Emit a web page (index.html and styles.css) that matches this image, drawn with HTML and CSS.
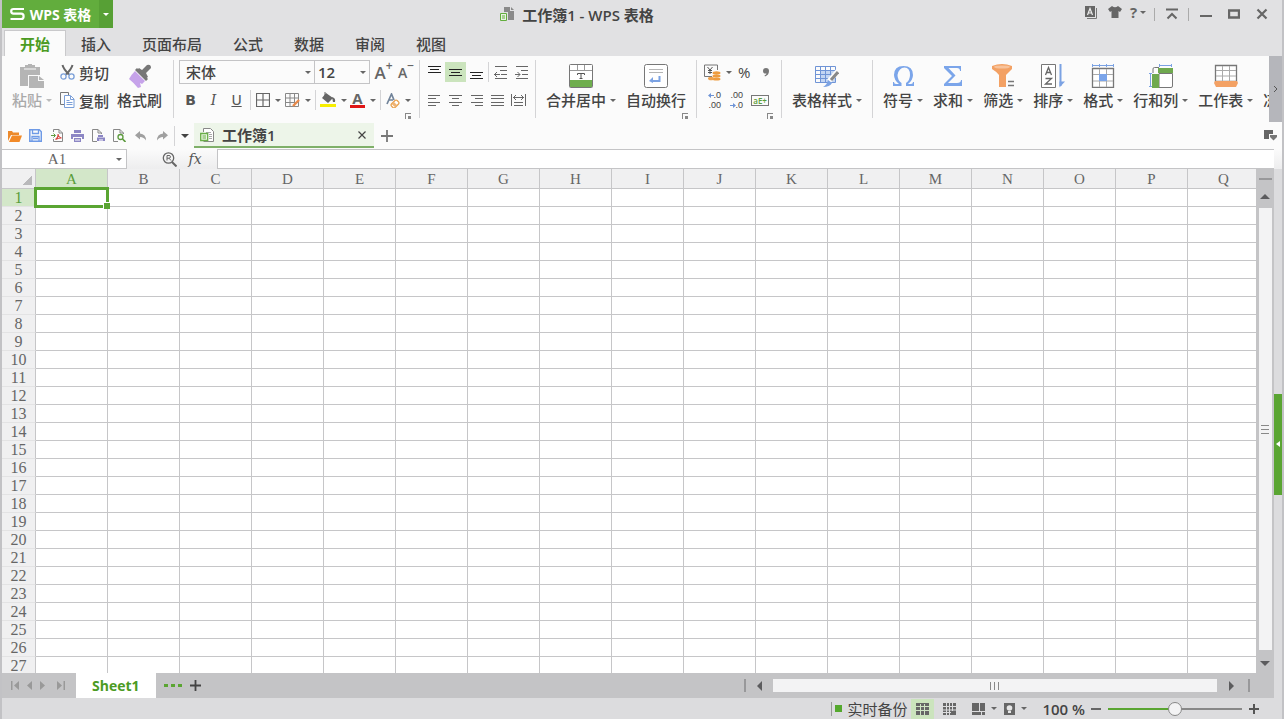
FILE: index.html
```
<!DOCTYPE html>
<html lang="zh-CN">
<head>
  <meta charset="UTF-8" />
  <meta name="viewport" content="width=device-width, initial-scale=1.0" />
  <title>工作簿1 - WPS 表格</title>
  <link rel="stylesheet" href="styles.css">
</head>
<body>
  <div class="window">
    <header class="titlebar">
      <div class="brand">
        <button class="brand-main">
          <svg width="15" height="14" viewBox="0 0 15 14" fill="none" stroke="#fff" stroke-width="2.2" stroke-linejoin="round"><path d="M14 2H3.5Q1.2 2 1.2 4.3Q1.2 6.6 3.5 6.6H11.2Q13.6 6.6 13.6 9.2Q13.6 12 11.2 12H0.5"/></svg>
          <span>WPS 表格</span>
        </button>
        <button class="brand-more" aria-label="菜单"><i class="caret"></i></button>
      </div>
      <h1 class="title">
        <svg width="15" height="14" viewBox="0 0 15 14"><path d="M4 0h6v4h4v9H8V5H4z" fill="#8a8a8a"/><path d="M11 0l3 3h-3z" fill="#8a8a8a"/><path d="M.5 6.500h6v7h-6z" fill="#eaf3e4" stroke="#62ad3d"/><path d="M2 9h3M2 11h3" stroke="#62ad3d"/></svg>
        <span>工作簿1 - WPS 表格</span>
      </h1>
      <div class="window-tools">
        <button aria-label="账号"><svg width="12" height="13" viewBox="0 0 12 13"><path d="M0 0h10v11H0z" fill="#666"/><path d="M11.500 2v10.500H2" fill="none" stroke="#777"/><path d="M2.500 9L5 2.500 7.500 9M3.500 7h3" fill="none" stroke="#eee" stroke-width="1.200"/></svg></button>
        <button aria-label="皮肤"><svg width="14" height="12" viewBox="0 0 14 12"><path d="M4 0q3 2.500 6 0l4 3-2 3-1.500-1v7h-7V5L2 6 0 3z" fill="#666"/></svg></button>
        <button class="help" aria-label="帮助">?<i class="caret"></i></button>
        <i class="rule"></i>
        <button aria-label="隐藏功能区"><svg width="12" height="12" viewBox="0 0 12 12" fill="none" stroke="#666" stroke-width="2"><path d="M0 1.500h12M1.500 10.500L6 6l4.500 4.500"/></svg></button>
        <i class="rule"></i>
        <button aria-label="最小化"><svg width="12" height="12" viewBox="0 0 12 12"><path d="M0 7h12v2H0z" fill="#666"/></svg></button>
        <button aria-label="最大化"><svg width="12" height="12" viewBox="0 0 12 12"><path d="M1 2.500h10v7H1z" fill="none" stroke="#666" stroke-width="2.400"/></svg></button>
        <button aria-label="关闭"><svg width="12" height="12" viewBox="0 0 12 12"><path d="M1.500 1.500l9 9M10.500 1.500l-9 9" stroke="#666" stroke-width="2.200"/></svg></button>
      </div>
    </header>

    <nav class="tabs">
      <button class="tab active">开始</button>
      <button class="tab">插入</button>
      <button class="tab">页面布局</button>
      <button class="tab">公式</button>
      <button class="tab">数据</button>
      <button class="tab">审阅</button>
      <button class="tab">视图</button>
    </nav>

    <div class="ribbon">
      <div class="groups">
        <div class="group clipboard">
          <button class="tool" disabled>
            <svg width="24" height="24" viewBox="0 0 24 24"><path d="M0 3h5V1h3V0h4v1h3v2h5v8H8v11H0z" fill="#b5b5b5"/><path d="M4 5h12" stroke="#fbfbfb"/><path d="M9 12h9v5h6v7H9z" fill="#b5b5b5"/><path d="M19 12l5 4h-5z" fill="#b5b5b5"/></svg>
            <span>粘贴<i class="caret"></i></span>
          </button>
          <div class="rows">
            <button class="row-tool"><svg width="15" height="16" viewBox="0 0 15 16" fill="none"><path d="M2.500 1q1 4 6.500 9.500M12.500 1q-1 4-6.500 9.500" stroke="#666" stroke-width="2"/><circle cx="3.500" cy="12.500" r="2.600" stroke="#7b9fd8" stroke-width="1.300"/><circle cx="11.500" cy="12.500" r="2.600" stroke="#7b9fd8" stroke-width="1.300"/></svg>剪切</button>
            <button class="row-tool"><svg width="15" height="16" viewBox="0 0 15 16" fill="none"><path d="M4 12.500H.5V.5h8V3" stroke="#777"/><path d="M4.500 3.500h6l3.500 3.500v8.500H4.500z" fill="#fff" stroke="#7b9fd8"/><path d="M10.500 4v3.500H14M6.500 8.500h3M6.500 10.500h6M6.500 12.500h6" stroke="#7b9fd8"/></svg>复制</button>
          </div>
          <button class="tool">
            <svg width="24" height="24" viewBox="0 0 24 24"><path d="M9 4l11 11-2 2L7 6z" fill="#777"/><path d="M14 6l5-5q4-1 4 3l-5 5 2 4-3 2-8-9 2-2z" fill="#777"/><path d="M7 7l10 10-3 3-2-1 1 4-3 1Q6 19 1 15q2-4 6-8z" fill="#c6a3ea"/></svg>
            <span>格式刷</span>
          </button>
        </div>

        <div class="group font">
          <div class="rows">
            <div class="line">
              <span class="drop family"><select aria-label="字体"><option>宋体</option></select></span>
              <span class="drop size"><select aria-label="字号"><option>12</option></select></span>
              <button class="ico grow" aria-label="增大字号">A<sup>+</sup></button>
              <button class="ico shrink" aria-label="减小字号">A<sup>−</sup></button>
            </div>
            <div class="line">
              <button class="ico letter b">B</button>
              <button class="ico letter i">I</button>
              <button class="ico letter u">U</button>
              <i class="sep"></i>
              <button class="split" aria-label="边框"><svg width="14" height="14" viewBox="0 0 14 14" fill="none" stroke="#666" stroke-width="1.200"><path d="M.5.5h13v13H.5zM7 0v14M0 7h14"/></svg><i class="caret"></i></button>
              <button class="split" aria-label="绘制边框"><svg width="15" height="14" viewBox="0 0 15 14" fill="none"><path d="M.5.5h13v13H.5zM5 0v14M9.500 0v14M0 5h14M0 9.500h14" stroke="#888"/><path d="M8 13l6-6" stroke="#e98b4b" stroke-width="2.400"/></svg><i class="caret"></i></button>
              <i class="sep"></i>
              <button class="split" aria-label="填充颜色"><svg width="16" height="16" viewBox="0 0 16 16"><path d="M6 1l7 5-5 5-6-5zM12 5q4 1 3 5l-2 0z" fill="#666"/><path d="M5 5V0" stroke="#666"/><path d="M0 12h16v3H0z" fill="#f7ee00"/></svg><i class="caret"></i></button>
              <button class="split fontcolor" aria-label="字体颜色"><span>A</span><i class="caret"></i></button>
              <i class="sep"></i>
              <button class="split" aria-label="清除格式"><svg width="14" height="15" viewBox="0 0 14 15" fill="none"><path d="M1 11L5.500 1 8 7M3 7h4" stroke="#72849a" stroke-width="1.700"/><rect x="-4" y="-2.500" width="8" height="5" rx="1.500" transform="translate(9 11) rotate(-45)" fill="#fff" stroke="#e9a04b" stroke-width="1.300"/><path d="M6 11.500l3 2.500 2-2-3-3z" fill="#efb374"/></svg><i class="caret"></i></button>
            </div>
          </div>
          <button class="launcher" aria-label="字体设置"></button>
        </div>

        <div class="group align">
          <div class="rows">
            <div class="line">
              <button class="ico" aria-label="顶端对齐"><svg width="13" height="13" viewBox="0 0 13 13" stroke="#222"><path d="M0 .5h13M2 3.500h9M0 6.500h13"/></svg></button>
              <button class="ico on" aria-label="垂直居中"><svg width="13" height="13" viewBox="0 0 13 13" stroke="#222"><path d="M0 3.500h13M2 6.500h9M0 9.500h13"/></svg></button>
              <button class="ico" aria-label="底端对齐"><svg width="13" height="13" viewBox="0 0 13 13" stroke="#222"><path d="M0 6.500h13M2 9.500h9M0 12.500h13"/></svg></button>
              <i class="sep thin"></i>
              <button class="ico" aria-label="减少缩进"><svg width="14" height="13" viewBox="0 0 14 13" stroke="#666"><path d="M1 .5h12M6 4.500h7M7 8.500h6M1 12.500h12M0 8.500h6M3 6L.5 8.500 3 11" fill="none"/></svg></button>
              <button class="ico" aria-label="增加缩进"><svg width="14" height="13" viewBox="0 0 14 13" stroke="#666"><path d="M1 .5h12M6 4.500h7M7 8.500h6M1 12.500h12M0 8.500h5M2.500 6L5 8.500 2.500 11" fill="none"/></svg></button>
            </div>
            <div class="line">
              <button class="ico" aria-label="左对齐"><svg width="13" height="11" viewBox="0 0 13 11" stroke="#666"><path d="M0 .5h12M0 3.500h8M0 7.500h12M0 10.500h8"/></svg></button>
              <button class="ico" aria-label="水平居中"><svg width="13" height="11" viewBox="0 0 13 11" stroke="#666"><path d="M0 .5h13M3 3.500h7M0 7.500h13M3 10.500h7"/></svg></button>
              <button class="ico" aria-label="右对齐"><svg width="13" height="11" viewBox="0 0 13 11" stroke="#666"><path d="M1 .5h12M5 3.500h8M1 7.500h12M5 10.500h8"/></svg></button>
              <button class="ico" aria-label="两端对齐"><svg width="13" height="11" viewBox="0 0 13 11" stroke="#666"><path d="M0 .5h13M0 3.500h13M0 7.500h13M0 10.500h13"/></svg></button>
              <button class="ico" aria-label="分散对齐"><svg width="15" height="12" viewBox="0 0 15 12" stroke="#666" fill="none"><path d="M.5 0v12M14.500 0v12M2 3.500h11M5 1L2.500 3.500 5 6M10 1l2.500 2.500L10 6M3 8.500h9M3 11.500h9"/></svg></button>
            </div>
          </div>
        </div>

        <div class="group merge">
          <button class="tool">
            <svg width="24" height="24" viewBox="0 0 24 24"><rect x=".5" y=".5" width="23" height="23" rx="1" fill="#fff" stroke="#777"/><path d="M1 6.500h22M8.500 1v5M15.500 1v5" stroke="#999"/><path d="M1 16h22v7H1z" fill="#6fae4e"/><path d="M8.500 11V9.500h7V11M12 9.500v5M10.500 14.500h3" fill="none" stroke="#555"/></svg>
            <span>合并居中<i class="caret"></i></span>
          </button>
          <button class="tool">
            <svg width="24" height="24" viewBox="0 0 24 24" fill="none"><rect x=".5" y=".5" width="23" height="23" rx="2" fill="#fff" stroke="#777"/><path d="M5 5.500h14M5 8.500h14" stroke="#b5b5b5"/><path d="M15.500 12v6M16 17h-9" stroke="#7ba2e3" stroke-width="2"/><path d="M9 13v6l-4-2z" fill="#7ba2e3"/></svg>
            <span>自动换行</span>
          </button>
          <button class="launcher" aria-label="对齐设置"></button>
        </div>

        <div class="group number">
          <div class="rows">
            <div class="line">
              <button class="split" aria-label="货币"><svg width="17" height="17" viewBox="0 0 17 17" fill="none"><path d="M8 12.500H.5V1h13v5" stroke="#777"/><path d="M3.500 3L6 6l2.500-3M6 6v4M4 6.500h4M4 8.500h4" stroke="#555"/><ellipse cx="12.500" cy="9" rx="4" ry="1.700" fill="#ee9b3d"/><ellipse cx="12.500" cy="12" rx="4" ry="1.500" fill="#ee9b3d"/><ellipse cx="12.500" cy="15" rx="4" ry="1.600" fill="#ee9b3d"/><ellipse cx="7" cy="14.500" rx="3" ry="1.800" fill="#f0a14a"/></svg><i class="caret"></i></button>
              <button class="ico pct">%</button>
              <button class="ico" aria-label="千位分隔"><svg width="8" height="9" viewBox="0 0 8 9"><path d="M4 0q3 0 3 3 0 4-4 5.500l-.5-1Q4.500 6.500 4.500 5.500 1 6 1 3q0-3 3-3z" fill="#777"/></svg></button>
            </div>
            <div class="line">
              <button class="ico dec" aria-label="增加小数位"><span><svg width="6" height="5" viewBox="0 0 6 5"><path d="M0 2.500L3 0v2h3v1H3v2z" fill="#6f94d6"/></svg>.0</span><span>.00</span></button>
              <button class="ico dec" aria-label="减少小数位"><span>.00</span><span><svg width="6" height="5" viewBox="0 0 6 5"><path d="M6 2.500L3 0v2H0v1h3v2z" fill="#6f94d6"/></svg>.0</span></button>
              <button class="ico fmt"><span>aE+</span></button>
            </div>
          </div>
          <button class="launcher" aria-label="数字设置"></button>
        </div>

        <div class="group styles">
          <button class="tool">
            <svg width="24" height="24" viewBox="0 0 24 24" fill="none"><path d="M5 6h15v12H5z" fill="#c3d5f2"/><path d="M.5 2.500h20v16H.5zM5.500 2v17M10.500 2v17M15.500 2v17M0 6.500h21M0 10.500h21M0 14.500h21" stroke="#6f94d6"/><path d="M23 7l-9 10" stroke="#fbfbfb" stroke-width="5"/><path d="M23 8l-7 8" stroke="#888" stroke-width="3"/><path d="M13 16l4 3q-2 4-9 4 4-2 5-7z" fill="#7ba2e3"/></svg>
            <span>表格样式<i class="caret"></i></span>
          </button>
        </div>

        <div class="group edit">
          <button class="tool">
            <svg width="24" height="24" viewBox="0 0 24 24"><path d="M2 22v-4h1q0 2 2 2h3Q3 16 3 11 3 2 12.500 2T22 11q0 5-5 9h3q2 0 2-2h1v4h-8v-3q4-3 4-8 0-7.500-5.500-7.500T6.500 11q0 5 4 8v3z" fill="#7ba5ea"/></svg>
            <span>符号<i class="caret"></i></span>
          </button>
          <button class="tool">
            <svg width="24" height="24" viewBox="0 0 24 24"><path d="M3 2h17v5h-1q0-3-3-3H7.500l7 7.500L7 19h9q4 0 4-3h1v6H3v-2l8-8-8-8z" fill="#7ba5ea"/></svg>
            <span>求和<i class="caret"></i></span>
          </button>
          <button class="tool">
            <svg width="24" height="24" viewBox="0 0 24 24"><path d="M1 2q10-4 20 0v3q-5 5-6 6v12H8V11Q6 8 1 5z" fill="#f3a164"/><ellipse cx="11" cy="3" rx="8" ry="1.600" fill="#f8c39b"/><path d="M17 17.500h6M17 21.500h6" stroke="#777" stroke-width="1.600"/></svg>
            <span>筛选<i class="caret"></i></span>
          </button>
          <button class="tool">
            <svg width="24" height="24" viewBox="0 0 24 24" fill="none"><path d="M.5.5h14v23H.5z" fill="#fff" stroke="#777"/><path d="M4.500 11L7.500 3.500 10.500 11M5.500 8.500h4M4.500 14.500h6l-6 5.500h6.500" stroke="#666" stroke-width="1.300"/><path d="M19.500 0v22" stroke="#7ba2e3" stroke-width="2"/><path d="M18.500 17.500H24l-5.500 6z" fill="#7ba2e3"/></svg>
            <span>排序<i class="caret"></i></span>
          </button>
          <button class="tool">
            <svg width="24" height="24" viewBox="0 0 24 24" fill="none"><path d="M1 1.500h22M1.500 0v3M8.500 0v3M15.500 0v3M22.500 0v3" stroke="#7ba2e3"/><path d="M1.500 4.500h21v19h-21z" fill="#fff" stroke="#777" stroke-width="1.300"/><path d="M2 10.500h20M2 17h20M8.500 5v18M15.500 5v18" stroke="#aaa"/><path d="M8 10h8v7H8z" fill="#7ba5ea"/></svg>
            <span>格式<i class="caret"></i></span>
          </button>
          <button class="tool">
            <svg width="24" height="24" viewBox="0 0 24 24" fill="none"><path d="M10 1.500h13M10.500 0v3M22.500 0v3M1.500 9v14M0 9.500h3M0 22.500h3" stroke="#7ba2e3"/><path d="M4 9V5q0-1.500 1.500-1.500H10" stroke="#777"/><path d="M10 9.500h13.500V22q0 1.500-1.500 1.500H10z" fill="#fff" stroke="#777"/><path d="M9 4h15v5H9zM3 10h7v14H3z" fill="#6fa94f"/></svg>
            <span>行和列<i class="caret"></i></span>
          </button>
          <button class="tool">
            <svg width="24" height="24" viewBox="0 0 24 24" fill="none"><path d="M1.500 1.500h21v16h-21z" fill="#fff" stroke="#777" stroke-width="1.300"/><path d="M2 6.500h20M2 12h20M8.500 2v15M15.500 2v15" stroke="#aaa"/><path d="M1 17h22l1 2-2 4H2l-2-4z" fill="#f3a164"/></svg>
            <span>工作表<i class="caret"></i></span>
          </button>
          <button class="tool"><svg width="24" height="24"></svg><span>冻结窗格</span></button>
        </div>
      </div>
      <button class="ribbon-next" aria-label="更多"><svg width="5" height="8" viewBox="0 0 5 8"><path d="M1 1l3 3-3 3" fill="none" stroke="#555"/></svg></button>
    </div>

    <div class="docbar">
      <div class="quick">
        <button aria-label="打开"><svg width="14" height="12" viewBox="0 0 14 12"><path d="M0 11V1h4l1 1.500h6V5H3z" fill="#ec8a2c"/><path d="M4 5.500h10L11.500 12H1z" fill="#f28a28"/></svg></button>
        <button aria-label="保存"><svg width="13" height="13" viewBox="0 0 13 13" fill="none" stroke="#6e9ae6"><path d="M.8.8h9.500l2 2v9.500H.8z" stroke-width="1.500"/><path d="M3.500 1v3.500h6V1M3 12V7.500h7V12M4 9.500h5" stroke-width="1.300"/></svg></button>
        <button aria-label="输出为PDF"><svg width="12" height="13" viewBox="0 0 12 13" fill="none"><path d="M2.500 3V.5H8l3.500 3.500v8.500h-9V10M8 .5V4h3.500" stroke="#888"/><path d="M0 6.500h4M2.500 4.500l2 2-2 2" stroke="#5c9a3d"/><path d="M4.500 10.500q3-2 2.500-5.500 0 3 3.500 4-3 0-6 1.500z" stroke="#d7433c" stroke-width="1.200"/></svg></button>
        <button aria-label="打印"><svg width="13" height="12" viewBox="0 0 13 12"><path d="M3 0h7v3H3zM0 4h13v5h-2V7H2v2H0zM3 8h7v4H3z" fill="#8c86c4"/><path d="M4 10h5" stroke="#fff"/></svg></button>
        <button aria-label="打印预览"><svg width="13" height="13" viewBox="0 0 13 13" fill="none"><path d="M5 12.500H.5V.5H6L9.500 4v1M6 .5V4h3.500" stroke="#888"/><path d="M6 6h5v2H6zM5 8.500h8V12H5z" fill="#8c86c4"/><path d="M7 11h4" stroke="#fff"/></svg></button>
        <button aria-label="查找"><svg width="13" height="13" viewBox="0 0 13 13" fill="none"><path d="M5 12.500H.5V.5H7L10.500 4v1M7 .5V4h3.500" stroke="#888"/><circle cx="7.500" cy="8" r="2.500" stroke="#5c9a3d" stroke-width="1.300"/><path d="M9.500 10l3 3" stroke="#5c9a3d" stroke-width="1.600"/></svg></button>
        <button aria-label="撤消"><svg width="12" height="10" viewBox="0 0 12 10"><path d="M5 0v2.500Q11 3 11 9.500 9 6 5 6v2.500L0 4.200z" fill="#a0a0a0"/></svg></button>
        <button aria-label="恢复"><svg width="12" height="10" viewBox="0 0 12 10"><path d="M7 0v2.500Q1 3 1 9.500 3 6 7 6v2.500l5-4.300z" fill="#a0a0a0"/></svg></button>
      </div>
      <button class="quick-more" aria-label="自定义"><i class="caret"></i></button>
      <div class="doctab">
        <svg width="14" height="14" viewBox="0 0 14 14" fill="none"><path d="M3.500 4V.5h7l3 3v10h-10" fill="#fff" stroke="#888"/><path d="M6 4.500h5M9 6.500h3M9 8.500h3M9 10.500h3" stroke="#aaa"/><path d="M.7 5.500h7v7h-7z" fill="#eaf5e2" stroke="#6aae48" stroke-width="1.300"/><path d="M2.500 8h3.500M2.500 10h3.500" stroke="#6aae48"/></svg>
        <span>工作簿1</span>
        <button aria-label="关闭工作簿"><svg width="8" height="8" viewBox="0 0 8 8"><path d="M.5.5l7 7M7.500.5l-7 7" stroke="#444" stroke-width="1.200"/></svg></button>
      </div>
      <button class="newdoc" aria-label="新建"><svg width="12" height="12" viewBox="0 0 12 12"><path d="M6 0v12M0 6h12" stroke="#777" stroke-width="1.800"/></svg></button>
      <button class="doclist" aria-label="工作簿列表"><svg width="13" height="11" viewBox="0 0 13 11"><path d="M0 0h9v4H5v5H0z" fill="#666"/><path d="M6 5h7v2l-3.500 3.500L6 7z" fill="#777"/></svg></button>
    </div>

    <div class="formulabar">
      <div class="namebox">
        <input type="text" value="A1" aria-label="名称框">
        <button aria-label="名称列表"><i class="caret"></i></button>
      </div>
      <button aria-label="浏览公式结果"><svg width="15" height="15" viewBox="0 0 15 15" fill="none" stroke="#666"><circle cx="6.500" cy="6" r="5.200" stroke-width="1.300"/><path d="M10 10l4.500 4.500" stroke-width="2"/><path d="M5 8.500v-5h2q1.500 0 1.500 1.300T7 6.200H5M7 6.200l2 2.300" stroke-width="1"/></svg></button>
      <button class="fx">fx</button>
      <input class="formula" type="text" aria-label="编辑栏">
    </div>

    <div class="body">
      <div class="workspace">
        <div class="sheet">
          <div class="cells"><table class="grid"><thead></thead><tbody></tbody></table></div>
          <div class="vscroll">
            <i class="splitbar"></i>
            <i class="arrow up"></i>
            <div class="thumb"><i></i><i></i><i></i></div>
            <i class="arrow down"></i>
          </div>
        </div>
        <div class="sheetbar">
          <div class="sheetnav">
            <button aria-label="第一张"><svg width="8" height="9" viewBox="0 0 8 9"><path d="M0 0h1.500v9H0zM8 0v9L3 4.500z" fill="#999"/></svg></button>
            <button aria-label="上一张"><svg width="5" height="9" viewBox="0 0 5 9"><path d="M5 0v9L0 4.500z" fill="#999"/></svg></button>
            <button aria-label="下一张"><svg width="5" height="9" viewBox="0 0 5 9"><path d="M0 0v9l5-4.500z" fill="#999"/></svg></button>
            <button class="last" aria-label="最后一张"><svg width="8" height="9" viewBox="0 0 8 9"><path d="M6.500 0H8v9H6.500zM0 0v9l5-4.500z" fill="#999"/></svg></button>
          </div>
          <button class="sheettab">Sheet1</button>
          <button class="dots" aria-label="工作表列表"><i></i><i></i><i></i></button>
          <button class="addsheet" aria-label="新建工作表"><svg width="11" height="11" viewBox="0 0 11 11"><path d="M5.500 0v11M0 5.500h11" stroke="#444" stroke-width="1.800"/></svg></button>
          <div class="hscroll">
            <i class="bar"></i>
            <i class="arrow left"></i>
            <div class="thumb"><i></i><i></i><i></i></div>
            <i class="arrow right"></i>
            <i class="bar"></i>
          </div>
        </div>
        <footer class="status">
          <span class="backup"><i></i>实时备份</span>
          <button class="view on" aria-label="普通视图"><svg width="13" height="12" viewBox="0 0 13 12"><path d="M0 0h13v12H0z" fill="#666"/><path d="M0 3.500h13M0 7.500h13M4.500 1v11M8.500 1v11" stroke="#cfe4c4"/></svg></button>
          <button class="view" aria-label="分页预览"><svg width="13" height="12" viewBox="0 0 13 12"><path d="M0 0h13v12H0z" fill="#666"/><path d="M0 3.500h13M0 7h13M3.500 0v12M6.500 0v12M9.500 0v8M0 9.500h8" stroke="#dcdcde"/></svg></button>
          <button class="viewdrop" aria-label="阅读模式"><svg width="13" height="12" viewBox="0 0 13 12"><path d="M0 0h13v12H0z" fill="#666"/><path d="M7.500 0v8M0 8.500h13M9.500 9v3" stroke="#dcdcde"/></svg><i class="caret"></i></button>
          <button class="viewdrop" aria-label="护眼模式"><svg width="11" height="12" viewBox="0 0 11 12"><path d="M0 0h11v12H0z" fill="#666"/><circle cx="5.500" cy="5" r="2.800" fill="#e6e6e6"/><path d="M4 8h3v2H4z" fill="#e6e6e6"/></svg><i class="caret"></i></button>
          <span class="zoom">100 %</span>
          <button aria-label="缩小"><svg width="10" height="10" viewBox="0 0 10 10"><path d="M0 4h10v2H0z" fill="#666"/></svg></button>
          <input class="slider" type="range" min="0" max="100" value="50" aria-label="缩放">
          <button aria-label="放大"><svg width="10" height="10" viewBox="0 0 10 10"><path d="M4 0h2v4h4v2H6v4H4V6H0V4h4z" fill="#555"/></svg></button>
        </footer>
      </div>
      <div class="side"><button aria-label="展开任务窗格"><i></i></button></div>
    </div>
  </div>

  <script>
    const cells = document.querySelector('.cells');
    const head = document.querySelector('.grid thead');
    const body = document.querySelector('.grid tbody');

    // fill the visible area with 72x18 cells
    function drawGrid() {
      const cols = Math.min(26, Math.ceil((cells.clientWidth - 34) / 72));
      const rows = Math.ceil((cells.clientHeight - 20) / 18);
      let html = '<tr><th class="corner"></th>';
      for (let c = 0; c < cols; c++) {
        html += `<th class="${c === 0 ? 'sel' : ''}">${String.fromCharCode(65 + c)}</th>`;
      }
      head.innerHTML = html + '</tr>';
      html = '';
      for (let r = 1; r <= rows; r++) {
        html += `<tr><th class="${r === 1 ? 'sel' : ''}">${r}</th>`;
        for (let c = 0; c < cols; c++) {
          html += r === 1 && c === 0 ? '<td class="current"></td>' : '<td></td>';
        }
        html += '</tr>';
      }
      body.innerHTML = html;
    }

    drawGrid();
    window.addEventListener('resize', drawGrid);
  </script>
</body>
</html>
```

FILE: styles.css
```
* { box-sizing: border-box; margin: 0; padding: 0; }
body { font-family: "Open Sans", "Noto Sans CJK SC", sans-serif; font-size: 15px; color: #444; overflow: hidden; }
button { border: none; background: none; font: inherit; color: inherit; display: flex; align-items: center; justify-content: center; flex: none; cursor: pointer; }
input, select { font: inherit; color: inherit; border: none; outline: none; background: none; }
svg { display: block; flex: none; }
i { font-style: normal; }

.window { display: flex; flex-direction: column; height: 100vh; border: solid #c2c2c5; border-width: 0 2px; background: #e1e1e3; }
.caret { flex: none; width: 0; height: 0; border: 3px solid transparent; border-top-color: #666; border-bottom-width: 0; }

/* title bar */
.titlebar { display: flex; height: 28px; }
.brand { display: flex; width: 111px; background: #62ad3d; color: #fff; }
.brand-main { flex: 1; gap: 5px; font-size: 14px; font-weight: 700; }
.brand-more { width: 14px; background: #57a035; }
.brand-more .caret { border-top-color: #fff; }
.title { display: flex; flex: 1; align-items: center; justify-content: center; gap: 7px; padding-right: 40px; font-size: 15px; font-weight: 600; }
.window-tools { display: flex; justify-content: flex-end; align-items: center; padding-right: 4px; }
.window-tools button { width: 24px; height: 24px; margin-right: 4px; }
.window-tools button:nth-child(-n+2) { width: 20px; padding-bottom: 4px; }
.window-tools .help { gap: 3px; width: 18px; margin-right: 7px; padding-bottom: 4px; font-size: 15px; font-weight: 700; color: #666; }
.rule { width: 1px; height: 13px; margin-right: 5px; background: #aaa; }

/* tabs */
.tabs { display: flex; align-items: flex-end; gap: 1px; height: 28px; padding-left: 3px; }
.tab { height: 25px; padding: 0 15px; font-weight: 500; }
.tab.active { background: #fbfbfb; color: #4b9b23; font-weight: 700; box-shadow: 0 0 0 1px #c9c9cb; clip-path: inset(-1px -1px 0 -1px); }

/* ribbon */
.ribbon { display: flex; height: 66px; background: #fbfbfb; }
.groups { display: flex; flex: 1; min-width: 0; padding: 4px 0; overflow: hidden; }
.ribbon-next { width: 13px; background: #b5b6bb; }
.group { position: relative; display: flex; flex: none; border-right: 1px solid #d4d4d6; }
.clipboard { gap: 8px; padding: 0 11px 0 10px; }
.font { padding: 0 4px 0 5px; }
.align { padding: 0 3px 0 4px; }
.merge { gap: 10px; padding: 0 10px; }
.number { padding: 0 4px 0 6px; }
.styles { padding: 0 10px; }
.edit { gap: 10px; padding-left: 10px; border-right: none; }
.rows { display: flex; flex-direction: column; gap: 4px; }
.line { display: flex; align-items: center; height: 24px; }
.tool { flex-direction: column; justify-content: flex-start; gap: 2px; height: 54px; padding-top: 4px; font-weight: 500; }
.tool span { display: flex; align-items: center; gap: 4px; line-height: 20px; white-space: nowrap; }
.tool:disabled { color: #aaa; }
.tool:disabled .caret { border-top-color: #bbb; }
.row-tool { gap: 4px; height: 24px; font-weight: 500; }
.ico { width: 21px; height: 20px; }
.ico.on { background: #cbe4bd; }
.split { gap: 5px; width: 30px; height: 20px; }
.sep { flex: none; width: 1px; height: 20px; margin: 0 2px; background: #d4d4d6; }
.sep.thin { margin: 0 1px; }
.letter { width: 23px; color: #555; font-family: "DejaVu Sans", sans-serif; font-size: 14px; }
.letter.b { font-weight: 700; }
.letter.i { font-family: "DejaVu Serif", serif; font-style: italic; }
.letter.u { text-decoration: underline; }
.drop { position: relative; height: 24px; border: 1px solid #c4c4c6; }
.drop select { width: 100%; height: 100%; padding-left: 6px; appearance: none; }
.drop::after { content: ""; position: absolute; right: 3px; top: 10px; border: 3px solid transparent; border-top-color: #666; border-bottom-width: 0; pointer-events: none; }
.family { width: 136px; font-weight: 500; }
.size { width: 56px; margin-left: -1px; font-weight: 600; }
.size select { padding-left: 3px; }
.grow, .shrink { align-items: center; margin-left: 3px; font-weight: 600; color: #666; }
.grow { font-size: 17px; }
.shrink { width: 18px; font-size: 14px; }
.grow sup, .shrink sup { font-size: 12px; line-height: 8px; align-self: flex-start; }
.fontcolor span { width: 15px; height: 16px; border-bottom: 3px solid #e01616; color: #666; font-size: 15px; font-weight: 700; line-height: 13px; }
.pct, .number .ico { width: 22px; }
.pct { font-size: 15px; }
.dec { flex-direction: column; align-items: flex-end; padding-right: 4px; font-family: "Liberation Sans", sans-serif; font-size: 9px; line-height: 10px; }
.dec span { display: flex; align-items: center; }
.number .fmt { width: 26px; }
.fmt span { padding: 0 1px; border: 1px solid #777; color: #5a9d3a; font-size: 8px; font-weight: 600; line-height: 9px; }
.launcher { position: absolute; right: 8px; bottom: -1px; width: 6px; height: 6px; border: solid #888; border-width: 1px 0 0 1px; background: linear-gradient(#888, #888) right bottom / 3px 3px no-repeat; }

/* quick access and document tabs */
.docbar { display: flex; align-items: center; height: 27px; padding-left: 2px; background: #fbfbfb; }
.quick { display: flex; padding-right: 2px; border-right: 1px solid #d4d4d6; }
.quick button { width: 21px; height: 20px; }
.quick-more { width: 19px; height: 20px; }
.quick-more .caret { border-width: 4px 4px 0; border-top-color: #444; }
.doctab { display: flex; align-items: center; gap: 8px; width: 180px; height: 25px; padding: 0 8px 0 6px; border-bottom: 2px solid #7fb069; background: #edf5e9; font-weight: 600; }
.doctab button { margin-left: auto; }
.newdoc { width: 26px; height: 20px; }
.doclist { margin-left: auto; margin-right: 5px; }

/* name box and formula */
.formulabar { display: flex; align-items: center; height: 20px; padding-right: 8px; background: linear-gradient(#fbfbfb, #ededee); }
.formulabar > button { width: 26px; height: 18px; }
.namebox { display: flex; width: 125px; height: 20px; margin-right: 29px; border: 1px solid #c4c4c6; border-left: none; background: #fff; }
.namebox input { flex: 1; width: 0; font-family: "Liberation Serif", "Noto Sans CJK SC", serif; font-size: 15px; text-align: center; color: #666; }
.namebox button { width: 14px; }
.formulabar .fx { font-family: "DejaVu Serif", serif; font-style: italic; font-size: 14px; color: #555; }
.formula { flex: 1; height: 20px; margin-left: 9px; padding: 0 4px; border: 1px solid #c4c4c6; border-right: none; background: #fff; }

/* sheet */
.body { display: flex; flex: 1; min-height: 0; }
.workspace { display: flex; flex: 1; flex-direction: column; min-width: 0; }
.sheet { display: flex; flex: 1; min-height: 0; background: #c4c4c6; }
.cells { flex: 1; min-width: 0; overflow: hidden; background: #fff; }
.grid { table-layout: fixed; border-spacing: 0; width: 0; font-family: "Liberation Serif", serif; font-size: 16px; color: #666; }
.grid th { width: 72px; height: 18px; border: solid #c6c6c8; border-width: 0 1px 1px 0; background: #f0f0f1; font-weight: 400; line-height: 17px; }
.grid td { width: 72px; height: 18px; border: solid #c6c6c8; border-width: 0 1px 1px 0; }
.grid thead th { height: 20px; padding-top: 2px; font-size: 15px; }
.grid th:first-child { width: 34px; }
.grid tbody th { border-bottom-color: #e3e3e4; }
.grid .corner { background: linear-gradient(135deg, transparent 50%, #b9b9bb 50%) right 3px bottom 3px / 10px 10px no-repeat #f0f0f1; }
.grid .sel { background: #d3e7c9; color: #5a9d3a; }
.grid .current { position: relative; }
.current::before { content: ""; position: absolute; inset: -2px; border: 3px solid #5aa532; }
.current::after { content: ""; position: absolute; right: -3px; bottom: -3px; width: 6px; height: 6px; border: solid #fff; border-width: 1px 0 0 1px; background: #5aa532; }

.arrow { flex: none; width: 0; height: 0; border: 5px solid transparent; }
.arrow.up { border-top-width: 0; border-bottom-color: #5c5c5e; }
.arrow.down { border-bottom-width: 0; border-top-color: #5c5c5e; }
.arrow.left { border-left-width: 0; border-right-color: #5c5c5e; }
.arrow.right { border-right-width: 0; border-left-color: #5c5c5e; }
.vscroll { display: flex; flex-direction: column; align-items: center; width: 18px; padding: 9px 0 7px; }
.splitbar { width: 13px; height: 2px; margin-bottom: 14px; background: #98989a; }
.thumb { display: flex; flex: 1; align-items: center; justify-content: center; gap: 3px; background: #f3f3f4; }
.vscroll .thumb { flex-direction: column; width: 13px; margin: 9px 0 11px; }
.vscroll .thumb i { width: 8px; height: 1px; background: #888; }
.hscroll .thumb { height: 13px; margin: 0 12px 0 8px; }
.hscroll .thumb i { width: 1px; height: 8px; background: #888; }

.sheetbar { display: flex; align-items: center; height: 25px; background: #c4c4c6; }
.sheetnav { display: flex; gap: 8px; width: 74px; padding-left: 9px; }
.sheetnav .last { margin-left: 4px; }
.sheettab { height: 25px; padding: 0 16px; background: #fff; color: #4b9b23; font-size: 14px; font-weight: 700; }
.dots { gap: 3px; padding: 0 8px; }
.dots i { width: 4px; height: 3px; background: #5aa532; }
.hscroll { display: flex; align-items: center; width: 42%; margin-left: auto; padding: 0 24px 0 4px; }
.bar { width: 2px; height: 13px; background: #98989a; }
.hscroll .left { margin-left: 11px; margin-right: 3px; }
.hscroll .right { margin-right: 14px; }

/* status bar */
.status { display: flex; align-items: center; justify-content: flex-end; height: 21px; padding-right: 15px; background: #dcdcde; }
.backup { display: flex; align-items: center; gap: 5px; margin-right: 4px; padding-left: 3px; border-left: 1px solid #999; line-height: 14px; }
.backup i { width: 7px; height: 7px; background: #55a92e; }
.view { width: 23px; height: 20px; margin-right: 4px; }
.view.on { background: #cbe4bd; }
.viewdrop { gap: 6px; height: 20px; margin-left: 7px; }
.zoom { margin: 0 6px 0 15px; font-weight: 600; }
.slider { width: 134px; height: 16px; margin: 0 7px; appearance: none; }
.slider::-webkit-slider-runnable-track { height: 2px; background: linear-gradient(to right, #5aa532 50%, #888 50%); }
.slider::-webkit-slider-thumb { appearance: none; width: 14px; height: 14px; margin-top: -6px; border: 1px solid #888; border-radius: 50%; background: #f3f3f4; }

.side { display: flex; align-items: center; width: 8px; background: #dcdcde; }
.side button { width: 8px; height: 101px; background: #5aa532; }
.side i { border: 3px solid transparent; border-left-width: 0; border-right: 4px solid #fff; }
```
